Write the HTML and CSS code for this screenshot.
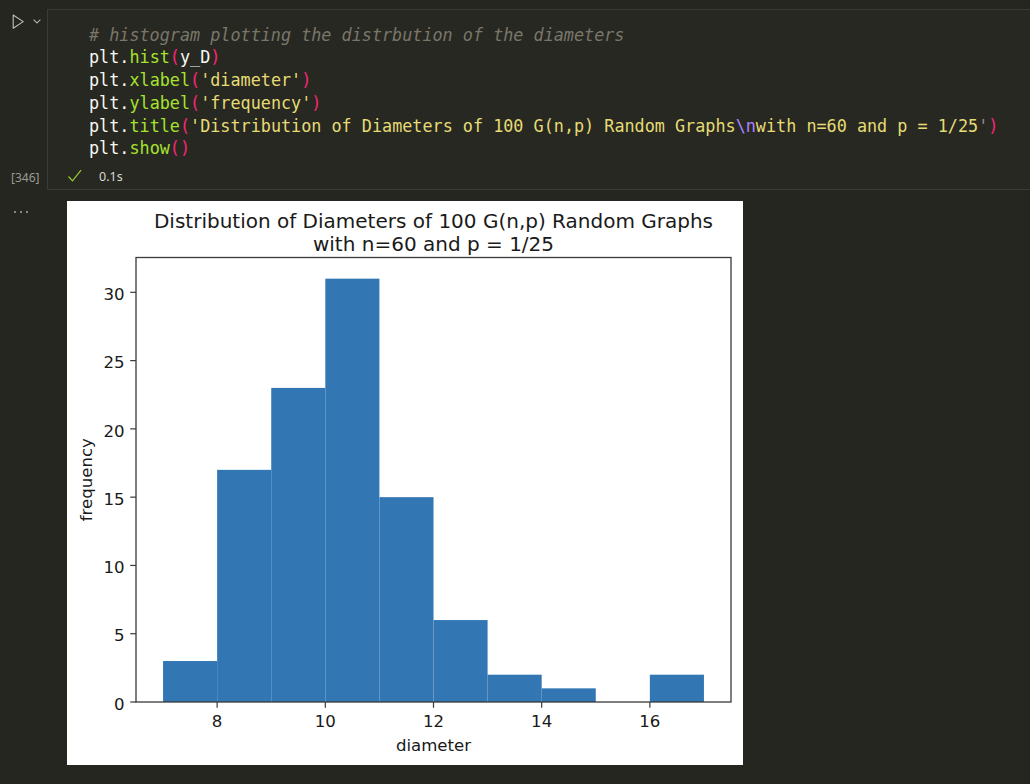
FILE: index.html
```html
<!DOCTYPE html>
<html>
<head>
<meta charset="utf-8">
<link rel="stylesheet" href="styles.css">
</head>
<body>
<div class="cell">
  <div class="gutter">
    <div class="run">
      <svg width="36" height="18" viewBox="0 0 36 18">
        <path d="M1.2 1 L11.2 7.6 L1.2 14.2 Z" fill="none" stroke="#c0c0bb" stroke-width="1.1" stroke-linejoin="round"/>
        <path d="M21.6 5.6 L25 9 L28.4 5.6" fill="none" stroke="#b0b0ab" stroke-width="1.1"/>
      </svg>
    </div>
    <div class="count">[346]</div>
  </div>
  <div class="box">
<pre class="code"><span class="c"># histogram plotting the distrbution of the diameters</span>
<span class="v">plt</span>.<span class="f">hist</span><span class="p">(</span><span class="v">y_D</span><span class="p">)</span>
<span class="v">plt</span>.<span class="f">xlabel</span><span class="p">(</span><span class="s">'diameter'</span><span class="p">)</span>
<span class="v">plt</span>.<span class="f">ylabel</span><span class="p">(</span><span class="s">'frequency'</span><span class="p">)</span>
<span class="v">plt</span>.<span class="f">title</span><span class="p">(</span><span class="s">'Distribution of Diameters of 100 G(n,p) Random Graphs</span><span class="e">\n</span><span class="s">with n=60 and p = 1/25</span><span class="q">'</span><span class="p">)</span>
<span class="v">plt</span>.<span class="f">show</span><span class="p">()</span></pre>
    <div class="status">
      <svg class="check" width="16" height="14" viewBox="0 0 16 14">
        <path d="M1.5 7.5 L5.5 11.8 L14 1.2" fill="none" stroke="#9acd32" stroke-width="1.2"/>
      </svg>
      <span class="time">0.1s</span>
    </div>
  </div>
</div>
<div class="output">
  <div class="ogutter">
    <svg width="20" height="6" viewBox="0 0 20 6">
      <circle cx="2" cy="3" r="1" fill="#a8a8a3"/>
      <circle cx="8" cy="3" r="1" fill="#a8a8a3"/>
      <circle cx="14" cy="3" r="1" fill="#a8a8a3"/>
    </svg>
  </div>
  <div class="figure">
    <svg width="676" height="564" viewBox="0 0 676 564" class="chart">
      <rect x="0" y="0" width="676" height="564" fill="#ffffff"/>
      <g fill="#3277b4">
        <rect x="96.05" y="460.03" width="54.09" height="40.97"/>
        <rect x="150.14" y="268.85" width="54.09" height="232.15"/>
        <rect x="204.23" y="186.91" width="54.09" height="314.09"/>
        <rect x="258.32" y="77.67" width="54.09" height="423.33"/>
        <rect x="312.41" y="296.16" width="54.09" height="204.84"/>
        <rect x="366.5" y="419.06" width="54.09" height="81.94"/>
        <rect x="420.59" y="473.69" width="54.09" height="27.31"/>
        <rect x="474.68" y="487.34" width="54.09" height="13.66"/>
        <rect x="582.86" y="473.69" width="54.09" height="27.31"/>
      </g>
      <rect x="69" y="56.5" width="595" height="444.5" fill="none" stroke="#3a3a3a" stroke-width="1.3"/>
      <g stroke="#3a3a3a" stroke-width="1.2">
        <line x1="63.2" y1="501" x2="69" y2="501"/>
        <line x1="63.2" y1="432.72" x2="69" y2="432.72"/>
        <line x1="63.2" y1="364.44" x2="69" y2="364.44"/>
        <line x1="63.2" y1="296.16" x2="69" y2="296.16"/>
        <line x1="63.2" y1="227.88" x2="69" y2="227.88"/>
        <line x1="63.2" y1="159.6" x2="69" y2="159.6"/>
        <line x1="63.2" y1="91.32" x2="69" y2="91.32"/>
        <line x1="150.14" y1="501" x2="150.14" y2="506.8"/>
        <line x1="258.32" y1="501" x2="258.32" y2="506.8"/>
        <line x1="366.5" y1="501" x2="366.5" y2="506.8"/>
        <line x1="474.68" y1="501" x2="474.68" y2="506.8"/>
        <line x1="582.86" y1="501" x2="582.86" y2="506.8"/>
      </g>
      <g class="tick" text-anchor="end">
        <text x="57.5" y="508.5">0</text>
        <text x="57.5" y="440.3">5</text>
        <text x="57.5" y="372">10</text>
        <text x="57.5" y="303.7">15</text>
        <text x="57.5" y="235.5">20</text>
        <text x="57.5" y="167.2">25</text>
        <text x="57.5" y="98.9">30</text>
      </g>
      <g class="tick" text-anchor="middle">
        <text x="150.14" y="526">8</text>
        <text x="258.32" y="526">10</text>
        <text x="366.5" y="526">12</text>
        <text x="474.68" y="526">14</text>
        <text x="582.86" y="526">16</text>
      </g>
      <text class="tick" x="366.5" y="549.5" text-anchor="middle">diameter</text>
      <text class="tick" x="0" y="0" text-anchor="middle" transform="translate(25 278.75) rotate(-90)">frequency</text>
      <text class="title" text-anchor="middle"><tspan x="366.5" y="26.5">Distribution of Diameters of 100 G(n,p) Random Graphs</tspan><tspan x="366.5" y="49.5">with n=60 and p = 1/25</tspan></text>
    </svg>
  </div>
</div>
</body>
</html>
```
FILE: styles.css
```css
html, body {
  margin: 0;
  padding: 0;
  background: #262621;
  overflow: hidden;
}
body {
  width: 1030px;
  height: 784px;
  font-family: "Noto Sans", "Open Sans", sans-serif;
  color: #cccccc;
}
.cell {
  display: flex;
  padding-top: 9px;
}
.gutter {
  width: 47px;
  flex: none;
  display: flex;
  flex-direction: column;
  justify-content: space-between;
  padding-bottom: 3px;
  box-sizing: border-box;
}
.run {
  padding: 5px 0 0 12px;
  height: 18px;
}
.run svg {
  display: block;
}
.count {
  font-size: 12px;
  line-height: 18px;
  color: #9a9a95;
  padding-left: 11px;
}
.box {
  flex: 1;
  background: #272822;
  border-top: 1px solid #3b3b35;
  border-bottom: 1px solid #3b3b35;
  border-left: 1px solid #3b3b35;
  margin-right: -2px;
}
.code {
  margin: 0;
  padding: 13.5px 0 0 41px;
  font-family: "DejaVu Sans Mono", monospace;
  font-size: 16.8px;
  line-height: 22.8px;
  color: #f8f8f2;
  white-space: pre;
}
.c { color: #7a776a; font-style: italic; }
.v { color: #f8f8f2; }
.f { color: #a6e22e; }
.p { color: #f92672; }
.s { color: #e6db74; }
.e { color: #ae81ff; }
.q { color: #8f8f8a; }
.status {
  display: flex;
  align-items: center;
  height: 25px;
  padding: 3.5px 0 0 19px;
}
.check {
  display: block;
  margin-right: 16px;
}
.time {
  font-size: 12.5px;
  color: #d8d8d4;
}
.output {
  display: flex;
  padding-top: 11px;
}
.ogutter {
  width: 67px;
  flex: none;
  padding: 8px 0 0 13px;
  box-sizing: border-box;
}
.ogutter svg {
  display: block;
}
.figure svg {
  display: block;
}
.chart text {
  font-family: "DejaVu Sans", sans-serif;
  fill: #1a1a1a;
}
.tick {
  font-size: 16.6px;
}
.title {
  font-size: 20px;
}
```
